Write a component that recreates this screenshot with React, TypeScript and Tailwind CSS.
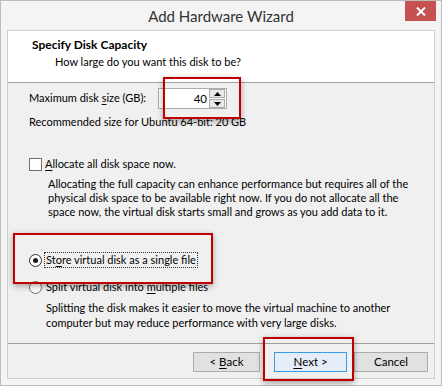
import React from "react";

const font = { fontFamily: 'Lato, "Noto Sans", sans-serif' };

function Ul({ children }: { children: React.ReactNode }) {
  return <span className="underline underline-offset-2">{children}</span>;
}

function Button({ children, primary }: { children: React.ReactNode; primary?: boolean }) {
  return (
    <button
      className={
        "w-full h-[20px] text-[11.5px] leading-none text-black flex items-center justify-center border " +
        (primary ? "border-[#3c9be8] bg-[#e5eef8]" : "border-[#adadad] bg-[#e1e1e1]")
      }
    >
      {children}
    </button>
  );
}

function RedBox({ className }: { className: string }) {
  return (
    <div
      className={
        "absolute border-2 border-[#c00000] shadow-[0_2px_6px_rgba(0,0,0,0.35)] pointer-events-none " + className
      }
    />
  );
}

export default function App() {
  return (
    <div
      style={font}
      className="relative w-[442px] h-[386px] bg-[#f4f4f4] border border-[#bdbdbd] flex flex-col text-[11px] text-black"
    >
      {/* title bar */}
      <div className="h-[29px] grid grid-cols-[1fr_auto_1fr] items-start">
        <div />
        <div className="pt-[5px] text-[15px] leading-[20px] text-[#333]">Add Hardware Wizard</div>
        <div className="flex justify-end pr-[5px]">
          <div className="w-[31px] h-[20px] bg-[#c75050] flex items-center justify-center">
            <svg width="10" height="9" viewBox="0 0 10 9">
              <path d="M1 0.5 L9 8.5 M9 0.5 L1 8.5" stroke="#fff" strokeWidth="2" />
            </svg>
          </div>
        </div>
      </div>

      {/* inner panel */}
      <div className="mx-[6px] border border-[#cfcfcf] flex-1 flex flex-col bg-[#f0f0f0]">
        <div className="h-[52px] bg-white border-b border-[#a0a0a0] pl-[24px] pt-[6px]">
          <div className="font-bold text-[12px] leading-[16px]">Specify Disk Capacity</div>
          <div className="pl-[23px] pt-[1px] leading-[16px]">How large do you want this disk to be?</div>
        </div>

        <div className="flex-1 flex flex-col pl-[21px] pr-[10px]">
          <div className="mt-[5px] flex items-center h-[21px]">
            <span className="w-[129px] whitespace-nowrap">
              Maximum disk <Ul>s</Ul>ize (GB):
            </span>
            <div className="flex h-[21px] border border-[#abadb3] bg-white">
              <div className="w-[50px] flex items-center justify-end pr-[2px] text-[11.5px]">40</div>
              <div className="w-[17px] flex flex-col justify-center gap-[1px] pr-[1px]">
                <div className="h-[9px] border border-[#acacac] bg-[#e8e8e8] flex items-center justify-center">
                  <svg width="7" height="4" viewBox="0 0 7 4"><path d="M3.5 0 L7 4 L0 4Z" fill="#000" /></svg>
                </div>
                <div className="h-[9px] border border-[#acacac] bg-[#e8e8e8] flex items-center justify-center">
                  <svg width="7" height="4" viewBox="0 0 7 4"><path d="M0 0 L7 0 L3.5 4Z" fill="#000" /></svg>
                </div>
              </div>
            </div>
          </div>

          <div className="mt-[5px] leading-[16px]">Recommended size for Ubuntu 64-bit: 20 GB</div>

          <div className="mt-[26px] flex items-center h-[16px] gap-[3px]">
            <div className="w-[13px] h-[13px] border border-[#707070] bg-white" />
            <span>
              <Ul>A</Ul>llocate all disk space now.
            </span>
          </div>

          <p className="mt-[5px] pl-[19px] w-[390px] leading-[14px]">
            Allocating the full capacity can enhance performance but requires all of the physical disk space to be
            available right now. If you do not allocate all the space now, the virtual disk starts small and grows as
            you add data to it.
          </p>

          <div className="mt-[33px] flex items-center h-[16px] gap-[3px]">
            <div className="w-[13px] h-[13px] rounded-full border border-[#333] bg-white flex items-center justify-center">
              <div className="w-[5px] h-[5px] rounded-full bg-[#1a1a1a]" />
            </div>
            <span className="outline outline-1 outline-dotted outline-[#333] px-[1px] leading-[14px]">
              St<Ul>o</Ul>re virtual disk as a single file
            </span>
          </div>

          <div className="mt-[11px] flex items-center h-[16px] gap-[3px]">
            <div className="w-[13px] h-[13px] rounded-full border border-[#707070] bg-white" />
            <span className="px-[1px]">
              Split virtual disk into <Ul>m</Ul>ultiple files
            </span>
          </div>

          <p className="mt-[5px] pl-[17px] w-[390px] leading-[15px]">
            Splitting the disk makes it easier to move the virtual machine to another computer but may reduce
            performance with very large disks.
          </p>
        </div>

        <div className="h-[35px] border-t border-[#a0a0a0] flex items-start justify-end pt-[8px] pr-[6px]">
          <div className="w-[67px]">
            <Button>
              &lt;&nbsp;<Ul>B</Ul>ack
            </Button>
          </div>
          <div className="w-[73px] ml-[14px]">
            <Button primary>
              <Ul>N</Ul>ext&nbsp;&gt;
            </Button>
          </div>
          <div className="w-[74px] ml-[7px]">
            <Button>Cancel</Button>
          </div>
        </div>
      </div>
      <div className="h-[6px]" />

      <RedBox className="left-[162px] top-[76px] w-[78px] h-[42px]" />
      <RedBox className="left-[12px] top-[232px] w-[200px] h-[51px]" />
      <RedBox className="left-[262px] top-[336px] w-[91px] h-[44px]" />
    </div>
  );
}
